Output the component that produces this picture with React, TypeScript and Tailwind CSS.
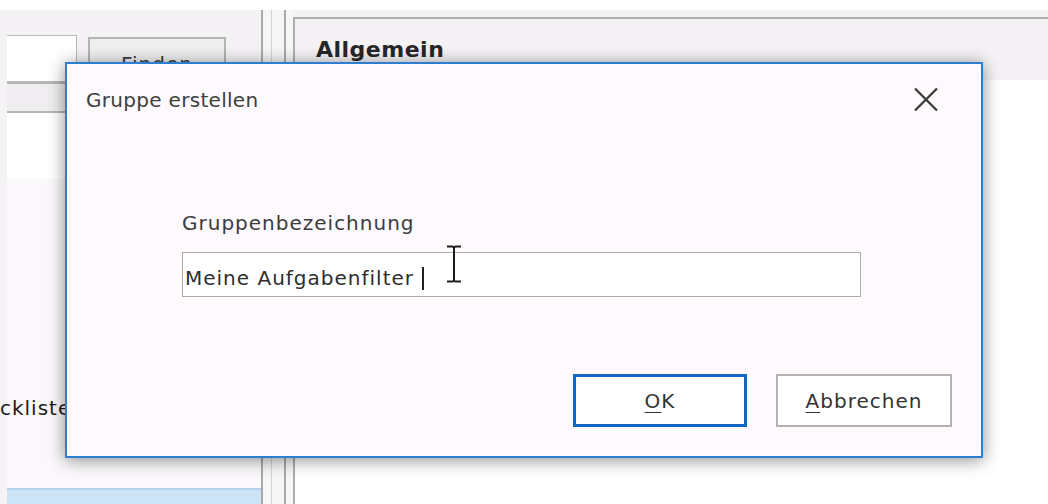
import React from "react";

const FONT = "font-['DejaVu_Sans',sans-serif]";

function CloseIcon() {
  return (
    <svg width="26" height="25" viewBox="0 0 26 25" className="shrink-0">
      <path d="M2 1.5 L24 23.5 M24 1.5 L2 23.5" stroke="#3a3a3a" strokeWidth="2.3" fill="none" />
    </svg>
  );
}

// mouse pointer resting over the text field
function IBeam() {
  return (
    <svg width="16" height="38" viewBox="0 0 16 38" className="absolute left-[446px] top-[245px]">
      <path d="M1 1.5 H6 M10 1.5 H15 M8 2 V36 M1 36.5 H6 M10 36.5 H15" stroke="#1c1c1c" strokeWidth="2" fill="none" />
      <path d="M6 1.5 Q8 1.5 8 3 Q8 1.5 10 1.5 M6 36.5 Q8 36.5 8 35 Q8 36.5 10 36.5" stroke="#1c1c1c" strokeWidth="2" fill="none" />
    </svg>
  );
}

function LeftPanel() {
  return (
    <div className="w-[261px] flex flex-col pl-[7px] overflow-hidden">
      <div className="h-[25px]" />
      <div className="h-[47px] flex items-start">
        <div className="w-[70px] h-[47px] bg-white border border-[#b8b8b8] border-l-0" />
        <div className="ml-[11px] mt-[2px] w-[138px] h-[45px] bg-[#f0eff0] border-2 border-[#b3b3b3] flex items-start justify-center pt-[10px] text-[20px] tracking-[1px] text-[#3c3c3c]">
          Finden
        </div>
      </div>
      <div className="h-[31px] border-y-2 border-[#b5b5b5] bg-[#efedef]" />
      <div className="h-[66px] bg-white" />
      <div className="flex-1 bg-[#faf8fa] flex flex-col">
        <div className="h-[217px]" />
        <div className="-ml-[49px] whitespace-nowrap text-[20px] tracking-[1px] leading-6 text-[#1e1e1e]">
          Checklisten
        </div>
      </div>
      <div className="h-[16px] bg-[#cde4f6] border-t-2 border-[#b3d2ee]" />
    </div>
  );
}

function Splitter() {
  return (
    <div className="w-[32px] flex bg-[#f7f6f7]">
      <div className="w-[2px] bg-[#a9a9a9]" />
      <div className="w-[8px]" />
      <div className="w-[1px] bg-[#d4d4d4]" />
      <div className="w-[12px]" />
      <div className="w-[2px] bg-[#a9a9a9]" />
      <div className="w-[7px]" />
    </div>
  );
}

function RightPanel() {
  return (
    <div className="flex-1 flex flex-col pt-[7px]">
      <div className="flex-1 flex flex-col border-l-2 border-t-2 border-[#aeaeae] bg-white">
        <div className="h-[61px] bg-[#f4f2f4] pl-[21px] pt-[19px]">
          <span className="text-[22px] font-bold leading-6 tracking-[0.5px] text-[#262626]">Allgemein</span>
        </div>
      </div>
    </div>
  );
}

function Dialog() {
  return (
    <div className="absolute left-[65px] top-[62px] w-[918px] h-[396px] bg-[#fdf9fd] border-2 border-[#2f7dd3] shadow-[0_2px_16px_rgba(0,0,0,0.45)] flex flex-col">
      <div className="flex items-start justify-between pt-[23px] pl-[19px] pr-[42px]">
        <span className="text-[20px] leading-6 tracking-[0.3px] mt-[1px] text-[#3f3f3f]">Gruppe erstellen</span>
        <CloseIcon />
      </div>
      <div className="pl-[115px] mt-[99px] flex flex-col">
        <label className="text-[20px] leading-6 tracking-[1px] text-[#3c3c3c]">Gruppenbezeichnung</label>
        <div className="mt-[17px] w-[679px] h-[45px] bg-white border border-[#acacac] pt-[13px] pl-[2px] flex items-start">
          <span className="text-[20px] leading-6 tracking-[1px] text-[#2e2e2e] whitespace-pre">Meine Aufgabenfilter </span>
          <span className="ml-[1px] mt-[1px] w-[2px] h-[23px] bg-[#202020]" />
        </div>
      </div>
      <div className="mt-auto flex justify-end gap-[29px] pr-[29px] pb-[29px]">
        <button className="w-[174px] h-[53px] bg-white border-[3px] border-[#1466c5] text-[20px] tracking-[1px] text-[#333]">
          <span className="underline underline-offset-[4px] decoration-1">O</span>K
        </button>
        <button className="w-[176px] h-[53px] bg-white border-2 border-[#b3b3b3] text-[20px] tracking-[1px] text-[#333]">
          <span className="underline underline-offset-[4px] decoration-1">A</span>bbrechen
        </button>
      </div>
    </div>
  );
}

export default function App() {
  return (
    <div className={`relative w-[1048px] h-[504px] overflow-hidden bg-[#f4f2f4] ${FONT} flex flex-col`}>
      <div className="h-[10px] bg-white shrink-0" />
      <div className="flex-1 flex">
        <LeftPanel />
        <Splitter />
        <RightPanel />
      </div>
      <Dialog />
      <IBeam />
    </div>
  );
}
